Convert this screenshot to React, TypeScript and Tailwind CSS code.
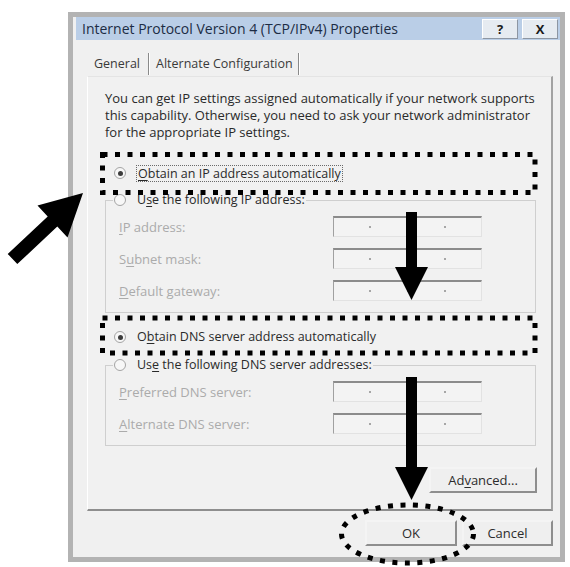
import type { ReactNode } from 'react'

const Key = ({ children }: { children: ReactNode }) => (
  <span className="underline decoration-1 underline-offset-2">{children}</span>
)

const Radio = ({ checked = false }: { checked?: boolean }) => (
  <span className="flex size-[12px] shrink-0 items-center justify-center rounded-full border border-[#a4a4a4] bg-[#f7f7f7]">
    {checked && <span className="size-[5px] rounded-full bg-[#3c3c3c]" />}
  </span>
)

// disabled IP address control: four empty fields split by dots
const IpBox = () => (
  <div className="flex h-[21px] w-[149px] items-center border-t-2 border-l border-r border-b border-t-[#8b8b8b] border-l-[#a0a0a0] border-r-[#e2e2e2] border-b-[#e2e2e2] bg-[#f3f3f3]">
    <span className="flex-1" />
    <span className="size-[2px] bg-[#a6a6a6]" />
    <span className="flex-1" />
    <span className="size-[2px] bg-[#a6a6a6]" />
    <span className="flex-1" />
    <span className="size-[2px] bg-[#a6a6a6]" />
    <span className="flex-1" />
  </div>
)

const Field = ({ label }: { label: ReactNode }) => (
  <div className="flex h-[21px] items-center">
    <span className="w-[214px] text-[13px] text-[#ababab]">{label}</span>
    <IpBox />
  </div>
)

const WinButton = ({ children, className }: { children: ReactNode; className: string }) => (
  <div
    className={`flex h-[26px] items-center justify-center border-2 border-t-[#f4f4f4] border-l-[#f4f4f4] border-r-[#8e8e8e] border-b-[#8e8e8e] bg-[#efefef] text-[13px] text-[#2c2c2c] ${className}`}
  >
    {children}
  </div>
)

const Annotations = () => (
  <svg className="pointer-events-none absolute left-0 top-0" width="570" height="567" viewBox="0 0 570 567">
    <g fill="none" stroke="#000" strokeWidth="5" strokeDasharray="5 7.5">
      <rect x="102.5" y="154.5" width="432.5" height="38" />
      <rect x="102.5" y="318" width="432.5" height="35" />
      <ellipse cx="407.5" cy="534" rx="66" ry="29" />
    </g>
    <g fill="#000">
      <polygon points="83,193 67.5,237.5 57.3,226.6 17.3,264.1 7.7,253.9 47.7,216.4 37.5,205.5" />
      <polygon points="406,212 417,212 417,267 428,267 411.5,300 395,267 406,267" />
      <polygon points="406,377 417,377 417,467 428,467 411.5,500 395,467 406,467" />
    </g>
  </svg>
)

export default function App() {
  return (
    <div className="relative h-[567px] w-[570px] overflow-hidden bg-white font-['Open_Sans',sans-serif] text-[12.5px] leading-[16px] text-[#2a2a2a]">
      <div className="ml-[68px] mt-[12px] flex h-[550px] w-[497px] flex-col border-[5px] border-[#b3b3b3] bg-[#f0f0f0]">
        {/* title bar */}
        <div className="ml-[3px] flex h-[23px] items-center bg-[#bacee7] pl-[6px] pr-[2px]">
          <span className="text-[14px] text-[#1c2c44]">Internet Protocol Version 4 (TCP/IPv4) Properties</span>
          <div className="ml-auto flex gap-[4px]">
            <div className="flex h-[20px] w-[36px] items-center justify-center border border-t-white border-l-white border-r-[#8d96a3] border-b-[#8d96a3] bg-[#e6ebf1] text-[13px] font-bold text-[#1a1a1a]">
              ?
            </div>
            <div className="flex h-[20px] w-[36px] items-center justify-center border border-t-white border-l-white border-r-[#8d96a3] border-b-[#8d96a3] bg-[#e6ebf1] text-[13px] font-bold text-[#1a1a1a]">
              X
            </div>
          </div>
        </div>

        {/* tabs */}
        <div className="ml-[15px] mt-[12px] flex h-[24px] items-center">
          <div className="flex h-full w-[60px] items-center pl-[6px] text-[#3a3a3a]">General</div>
          <div className="h-[22px] w-[2px] border-l border-r border-l-[#8a8a8a] border-r-white" />
          <div className="flex h-full w-[148px] items-center pl-[6px] text-[#3a3a3a]">Alternate Configuration</div>
          <div className="h-[22px] w-[2px] border-l border-r border-l-[#8a8a8a] border-r-white" />
        </div>

        {/* tab page */}
        <div className="ml-[14px] mr-[7px] flex h-[435px] flex-col border-l border-t border-r-2 border-b-2 border-l-white border-t-[#e4e4e4] border-r-[#a2a2a2] border-b-[#8e8e8e] bg-[#f1f1f1]">
          <div className="pl-[17px] pt-[13px] text-[13px] leading-[17px] whitespace-nowrap">
            <div>You can get IP settings assigned automatically if your network supports</div>
            <div>this capability. Otherwise, you need to ask your network administrator</div>
            <div>for the appropriate IP settings.</div>
          </div>

          <div className="mt-[24px] flex h-[16px] items-center gap-[10px] pl-[26px]">
            <Radio checked />
            <span className="border border-dotted border-[#6a6a6a] px-px leading-[15px]">
              <Key>O</Key>btain an IP address automatically
            </span>
          </div>

          <fieldset className="ml-[17px] mt-[11px] w-[431px] border border-[#cfcfcf] pb-[11px]">
            <legend className="ml-[7px] flex items-center gap-[11px] px-px">
              <Radio />
              <span>
                U<Key>s</Key>e the following IP address:
              </span>
            </legend>
            <div className="mt-[8px] flex flex-col gap-[11px] pl-[13px]">
              <Field label={<><Key>I</Key>P address:</>} />
              <Field label={<>S<Key>u</Key>bnet mask:</>} />
              <Field label={<><Key>D</Key>efault gateway:</>} />
            </div>
          </fieldset>

          <div className="mt-[16px] flex h-[16px] items-center gap-[11px] pl-[26px]">
            <Radio checked />
            <span>
              O<Key>b</Key>tain DNS server address automatically
            </span>
          </div>

          <fieldset className="ml-[17px] mt-[12px] w-[431px] border border-[#cfcfcf] pb-[11px]">
            <legend className="ml-[7px] flex items-center gap-[11px] px-px">
              <Radio />
              <span>
                Us<Key>e</Key> the following DNS server addresses:
              </span>
            </legend>
            <div className="mt-[8px] flex flex-col gap-[11px] pl-[13px]">
              <Field label={<><Key>P</Key>referred DNS server:</>} />
              <Field label={<><Key>A</Key>lternate DNS server:</>} />
            </div>
          </fieldset>

          <WinButton className="ml-auto mr-[14px] mt-[21px] w-[108px]">
            <span>
              Ad<Key>v</Key>anced...
            </span>
          </WinButton>
        </div>

        {/* dialog buttons */}
        <div className="mr-[7px] mt-[9px] flex justify-end gap-[5px]">
          <WinButton className="w-[92px]">OK</WinButton>
          <WinButton className="w-[91px]">Cancel</WinButton>
        </div>
      </div>

      <Annotations />
    </div>
  )
}
